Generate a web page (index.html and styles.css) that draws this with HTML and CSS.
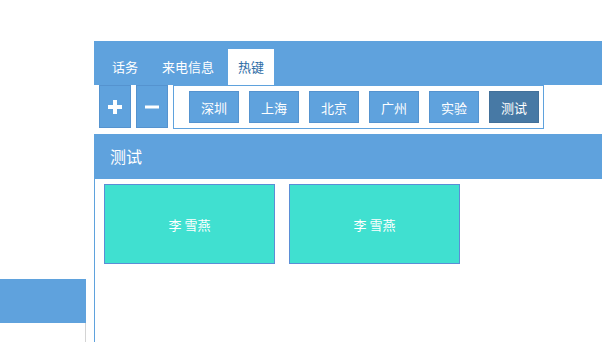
FILE: index.html
```html
<!DOCTYPE html>
<html lang="zh-CN">
<head>
<meta charset="utf-8">
<title>热键</title>
<link rel="stylesheet" href="styles.css">
</head>
<body>
<div class="page">
  <aside class="side">
    <div class="side-head"></div>
    <div class="side-body"></div>
  </aside>
  <main class="main">
    <nav class="tabbar">
      <div class="tab">话务</div>
      <div class="tab">来电信息</div>
      <div class="tab active">热键</div>
    </nav>
    <div class="toolbar">
      <button class="op" type="button" aria-label="添加">
        <svg width="14" height="14" viewBox="0 0 14 14"><rect x="5" y="0" width="4" height="14" fill="#fff"/><rect x="0" y="5" width="14" height="4" fill="#fff"/></svg>
      </button>
      <button class="op" type="button" aria-label="删除">
        <svg width="14" height="14" viewBox="0 0 14 14"><rect x="0" y="5.5" width="14" height="3" fill="#fff"/></svg>
      </button>
      <div class="groups">
        <button class="grp" type="button">深圳</button>
        <button class="grp" type="button">上海</button>
        <button class="grp" type="button">北京</button>
        <button class="grp" type="button">广州</button>
        <button class="grp" type="button">实验</button>
        <button class="grp current" type="button">测试</button>
      </div>
    </div>
    <div class="panel-head">测试</div>
    <div class="panel-body">
      <div class="card">李 雪燕</div>
      <div class="card">李 雪燕</div>
    </div>
  </main>
</div>
</body>
</html>
```
FILE: styles.css
```css
html, body {
  margin: 0;
  padding: 0;
  background: #fff;
  overflow: hidden;
}
body {
  font-family: "Noto Sans CJK SC", "Microsoft YaHei", sans-serif;
  font-size: 13px;
  color: #fff;
}
.page {
  display: flex;
  width: 602px;
  height: 342px;
  overflow: hidden;
}
.side {
  width: 86px;
  flex: none;
  padding-top: 279px;
  display: flex;
  flex-direction: column;
}
.side-head {
  height: 44px;
  background: #5fa2dd;
}
.side-body {
  flex: 1;
  box-sizing: border-box;
  border-right: 1px solid #d4d4d4;
}
.main {
  margin-left: 8px;
  margin-top: 41px;
  flex: 1;
  display: flex;
  flex-direction: column;
}
.tabbar {
  height: 44px;
  box-sizing: border-box;
  background: #5fa2dd;
  display: flex;
  align-items: flex-end;
  gap: 4px;
  padding-left: 8px;
}
.tab {
  height: 36px;
  line-height: 36px;
  padding: 0 10px;
  color: #fff;
}
.tab.active {
  background: #fff;
  color: #2f6ea6;
}
.toolbar {
  height: 49px;
  display: flex;
  align-items: flex-start;
  gap: 5px;
  padding-left: 5px;
}
.op {
  width: 32px;
  height: 43px;
  margin: 0;
  padding: 0;
  border: 1px solid #5593cf;
  background: #5fa2dd;
  display: flex;
  align-items: center;
  justify-content: center;
}
.groups {
  height: 44px;
  box-sizing: border-box;
  border: 1px solid #5fa2dd;
  padding: 5px 4px 0 15px;
  display: flex;
  align-items: flex-start;
  gap: 10px;
}
.grp {
  width: 50px;
  height: 32px;
  margin: 0;
  padding: 0;
  border: 1px solid #5593cf;
  background: #5fa2dd;
  color: #fff;
  font-family: inherit;
  font-size: 13px;
}
.grp.current {
  background: #4779a5;
  border-color: #42709a;
}
.panel-head {
  height: 45px;
  line-height: 45px;
  background: #5fa2dd;
  padding-left: 16px;
  font-size: 16px;
}
.panel-body {
  flex: 1;
  border-left: 1px solid #5fa2dd;
  padding: 5px 0 0 9px;
  display: flex;
  align-items: flex-start;
  gap: 14px;
}
.card {
  width: 171px;
  height: 80px;
  box-sizing: border-box;
  border: 1px solid #5b8ed6;
  background: #40e0d0;
  display: flex;
  align-items: center;
  justify-content: center;
  color: #fff;
  font-size: 13px;
}
```
